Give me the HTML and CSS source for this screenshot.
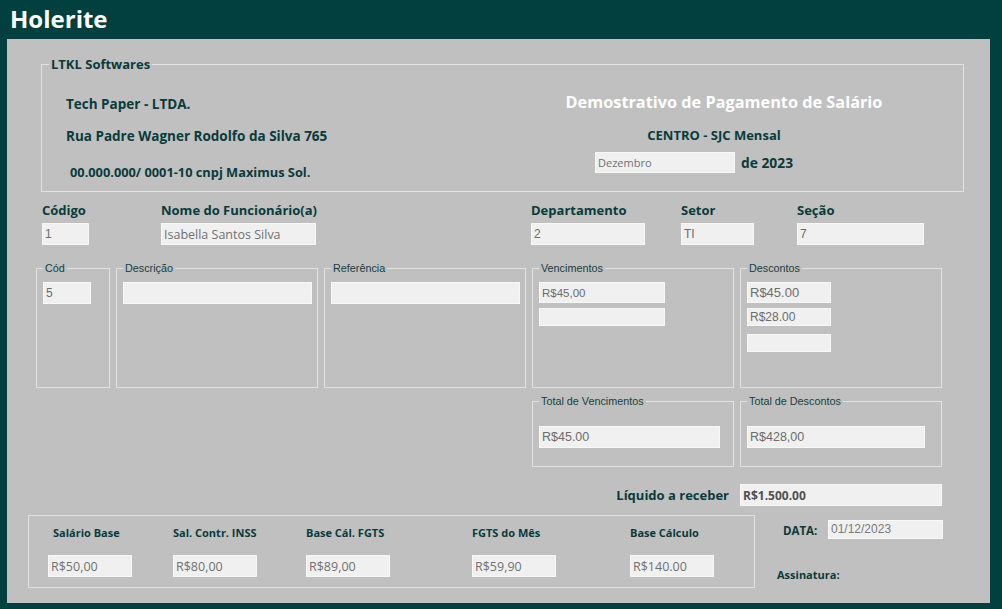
FILE: index.html
```html
<!DOCTYPE html>
<html lang="pt-BR">
<head>
<meta charset="utf-8">
<title>Holerite</title>
<link rel="stylesheet" href="styles.css">
</head>
<body>
<header class="titlebar">Holerite</header>
<main class="panel">
  <section class="company group">
    <span class="legend legend-big">LTKL Softwares</span>
    <div class="company-left">
      <div class="cline l1">Tech Paper - LTDA.</div>
      <div class="cline l2">Rua Padre Wagner Rodolfo da Silva 765</div>
      <div class="cline l3">00.000.000/ 0001-10 cnpj Maximus Sol.</div>
    </div>
    <div class="company-right">
      <div class="doc-title">Demostrativo de Pagamento de Salário</div>
      <div class="centro">CENTRO - SJC Mensal</div>
      <div class="date-row">
        <div class="tb tb-month">Dezembro</div>
        <span class="year">de 2023</span>
      </div>
    </div>
  </section>

  <section class="emp-row">
    <div class="field f-cod"><div class="flabel">Código</div><div class="tb ms">1</div></div>
    <div class="field f-nome"><div class="flabel">Nome do Funcionário(a)</div><div class="tb tb-nome">Isabella Santos Silva</div></div>
    <div class="field f-dep"><div class="flabel">Departamento</div><div class="tb ms">2</div></div>
    <div class="field f-set"><div class="flabel">Setor</div><div class="tb ms">TI</div></div>
    <div class="field f-sec"><div class="flabel">Seção</div><div class="tb ms">7</div></div>
  </section>

  <section class="items">
    <div class="group box">
      <span class="legend">Cód</span>
      <div class="tb ms w-cod">5</div>
    </div>
    <div class="group box">
      <span class="legend">Descrição</span>
      <div class="tb w-wide"></div>
    </div>
    <div class="group box">
      <span class="legend">Referência</span>
      <div class="tb w-wide"></div>
    </div>
    <div class="group box stack">
      <span class="legend">Vencimentos</span>
      <div class="tb ms venc w-venc">R$45,00</div>
      <div class="tb w-venc short"></div>
    </div>
    <div class="group box stack desc">
      <span class="legend">Descontos</span>
      <div class="tb ms ms13 w-desc">R$45.00</div>
      <div class="tb ms w-desc short">R$28.00</div>
      <div class="tb w-desc short">&nbsp;</div>
    </div>
    <div class="group total total-venc">
      <span class="legend">Total de Vencimentos</span>
      <div class="tb ms ms125 w-tv">R$45.00</div>
    </div>
    <div class="group total total-desc">
      <span class="legend">Total de Descontos</span>
      <div class="tb ms ms125 w-td">R$428,00</div>
    </div>
  </section>

  <section class="liquido-row">
    <span class="liq-label">Líquido a receber</span>
    <div class="tb tb-liq">R$1.500.00</div>
  </section>

  <section class="footer-row">
    <div class="group bases">
      <div class="bcol c1"><div class="blabel first">Salário Base</div><div class="tb tb-base">R$50,00</div></div>
      <div class="bcol c2"><div class="blabel">Sal. Contr. INSS</div><div class="tb tb-base">R$80,00</div></div>
      <div class="bcol c3"><div class="blabel">Base Cál. FGTS</div><div class="tb tb-base">R$89,00</div></div>
      <div class="bcol c4"><div class="blabel">FGTS do Mês</div><div class="tb tb-base">R$59,90</div></div>
      <div class="bcol c5"><div class="blabel">Base Cálculo</div><div class="tb tb-base">R$140.00</div></div>
    </div>
    <div class="sign">
      <div class="data-row">
        <span class="data-label">DATA:</span>
        <div class="tb tb-data">01/12/2023</div>
      </div>
      <div class="assin">Assinatura:</div>
    </div>
  </section>
</main>
</body>
</html>
```

FILE: styles.css
```css
* { box-sizing: border-box; }

html, body {
  margin: 0;
  padding: 0;
}

body {
  width: 1002px;
  height: 609px;
  overflow: hidden;
  background: #023f3f;
  font-family: "Open Sans", "Liberation Sans", sans-serif;
  color: #0a3b3b;
}

.titlebar {
  height: 39px;
  padding-left: 10px;
  font-family: "Open Sans", sans-serif;
  font-weight: 700;
  font-size: 24px;
  line-height: 38px;
  color: #ffffff;
}

.panel {
  display: block;
  margin-left: 7px;
  width: 983px;
  height: 564px;
  padding-top: 25px;
  background: #c0c0c0;
  overflow: hidden;
}

/* generic group box */
.group {
  position: relative;
  border: 1px solid #e2e2e2;
}

.legend {
  position: absolute;
  top: -7px;
  left: 6px;
  padding: 0 2px;
  background: #c0c0c0;
  font-family: "Liberation Sans", Arial, sans-serif;
  font-size: 10.8px;
  line-height: 13px;
  color: #173f3d;
  white-space: nowrap;
}

.legend-big {
  top: -10px;
  left: 7px;
  font-family: "Open Sans", sans-serif;
  font-weight: 700;
  font-size: 13px;
  line-height: 18px;
  color: #0a3b3b;
}

/* text boxes */
.tb {
  display: flex;
  align-items: center;
  height: 22px;
  padding: 0 2px;
  background: #f0f0f0;
  border: 1px solid #f8f8f8;
  font-family: "Open Sans", sans-serif;
  font-size: 12.5px;
  color: #707070;
  white-space: nowrap;
  overflow: hidden;
}

.tb.ms {
  font-family: "Liberation Sans", Arial, sans-serif;
  font-size: 12px;
  color: #6c6c6c;
}

.tb.ms13 { font-size: 13px; }
.tb.ms125 { font-size: 12.5px; }
.tb.venc { font-size: 11.5px; }

/* company block */
.company {
  display: flex;
  margin-left: 34px;
  width: 923px;
  height: 128px;
}

.company-left {
  width: 502px;
  padding-left: 24px;
  padding-top: 29px;
  font-weight: 700;
  font-size: 13.5px;
}

.cline {
  height: 20px;
  line-height: 20px;
  white-space: nowrap;
}

.cline.l2 { margin-top: 12px; }
.cline.l3 { margin-top: 16px; padding-left: 4px; font-size: 12.8px; }

.company-right {
  width: 360px;
  padding-top: 26px;
  text-align: center;
}

.doc-title {
  height: 22px;
  line-height: 22px;
  font-weight: 700;
  font-size: 16.3px;
  color: #ffffff;
  white-space: nowrap;
}

.centro {
  margin-top: 12px;
  padding-right: 20px;
  height: 20px;
  line-height: 20px;
  font-weight: 700;
  font-size: 13px;
}

.date-row {
  display: flex;
  align-items: center;
  gap: 6px;
  margin-top: 7px;
  padding-left: 51px;
}

.tb-month {
  width: 140px;
  height: 21px;
  font-size: 11px;
}

.year {
  font-weight: 700;
  font-size: 13.8px;
}

/* employee row */
.emp-row {
  display: flex;
  margin-top: 9px;
  padding-left: 35px;
}

.flabel {
  height: 22px;
  line-height: 19px;
  font-weight: 700;
  font-size: 13px;
  white-space: nowrap;
}

.f-cod { width: 47px; }
.f-nome { width: 155px; margin-left: 72px; }
.f-dep { width: 114px; margin-left: 215px; }
.f-set { width: 73px; margin-left: 36px; }
.f-sec { width: 127px; margin-left: 43px; }

/* items grid */
.items {
  display: grid;
  grid-template-columns: 74px repeat(4, 202px);
  grid-template-rows: 120px 66px;
  column-gap: 6px;
  row-gap: 13px;
  margin-top: 23px;
  margin-left: 29px;
}

.box {
  padding: 13px 6px 0 6px;
}

.stack {
  display: flex;
  flex-direction: column;
  gap: 5px;
}

.stack.desc .short + .short { margin-top: 3px; }

.w-cod { width: 48px; height: 22px; }
.w-wide { width: 189px; height: 22px; }
.w-venc { width: 126px; height: 21px; }
.w-desc { width: 84px; height: 21px; }
.short { height: 18px; }

.total {
  padding: 24px 6px 0 6px;
}

.total-venc { grid-column: 4; grid-row: 2; }
.total-desc { grid-column: 5; grid-row: 2; }

.w-tv { width: 181px; }
.w-td { width: 178px; }

/* liquido */
.liquido-row {
  display: flex;
  align-items: center;
  justify-content: flex-end;
  gap: 11px;
  width: 935px;
  margin-top: 17px;
}

.liq-label {
  font-weight: 700;
  font-size: 13px;
  line-height: 18px;
}

.tb-liq {
  width: 202px;
  font-weight: 700;
  font-size: 12px;
  color: #505050;
}

/* footer */
.footer-row {
  display: flex;
  margin-top: 9px;
}

.bases {
  display: flex;
  margin-left: 21px;
  width: 727px;
  height: 73px;
  padding-left: 19px;
  padding-top: 8px;
}

.bcol { width: 84px; }
.c2 { margin-left: 41px; }
.c3 { margin-left: 49px; }
.c4 { margin-left: 82px; }
.c5 { margin-left: 74px; }

.blabel {
  height: 18px;
  line-height: 18px;
  font-weight: 700;
  font-size: 11px;
  white-space: nowrap;
}

.blabel.first { padding-left: 5px; }

.tb-base {
  width: 84px;
  margin-top: 13px;
  font-size: 12.5px;
}

.sign {
  margin-left: 22px;
  padding-top: 5px;
}

.data-row {
  display: flex;
  align-items: flex-start;
  padding-left: 6px;
}

.data-label {
  margin-top: 3px;
  width: 45px;
  font-weight: 700;
  font-size: 11.5px;
  line-height: 16px;
}

.tb-data {
  width: 115px;
  height: 19px;
  align-items: flex-start;
  padding-top: 1px;
  font-family: "Liberation Sans", Arial, sans-serif;
  font-size: 12px;
  line-height: 14px;
  color: #7a7a7a;
}

.assin {
  margin-top: 28px;
  font-weight: 700;
  font-size: 11px;
  line-height: 16px;
}
```
